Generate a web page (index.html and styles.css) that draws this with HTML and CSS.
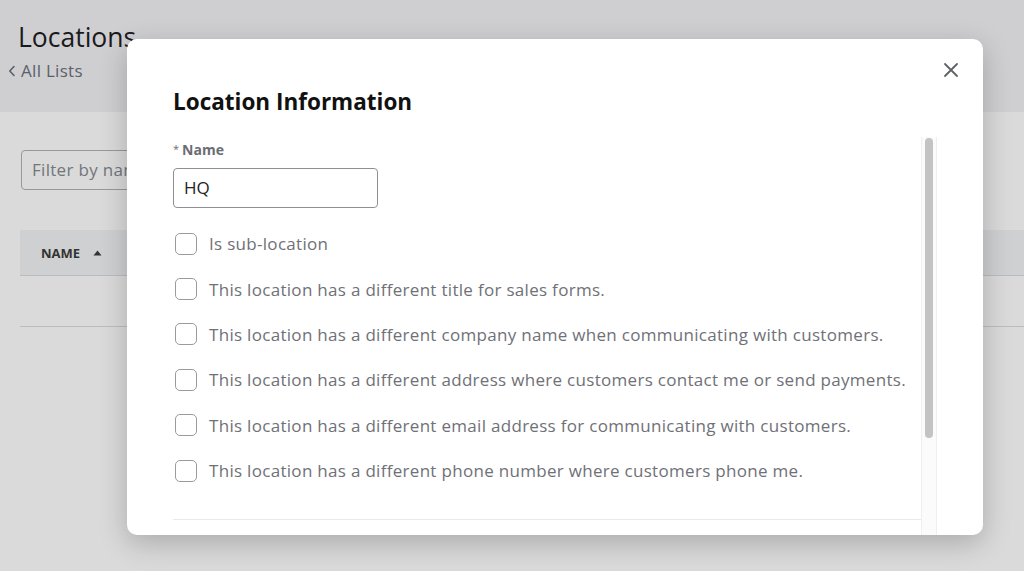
FILE: index.html
```html
<!DOCTYPE html>
<html lang="en">
<head>
<meta charset="utf-8">
<title>Locations</title>
<link rel="stylesheet" href="styles.css">
</head>
<body>
<div class="page">
  <header class="page-header">
    <h1 class="page-title">Locations</h1>
    <a class="back-link" href="#"><svg class="chev" width="8" height="12" viewBox="0 0 8 12"><path d="M6 1.5 L1.8 6 L6 10.5" stroke="#5a606b" stroke-width="1.6" fill="none" stroke-linecap="round" stroke-linejoin="round"/></svg>All Lists</a>
  </header>
  <main class="page-body">
    <div class="filter">Filter by name</div>
    <div class="table">
      <div class="table-head"><span class="th">NAME</span><svg class="sort" width="9" height="6" viewBox="0 0 9 6"><path d="M4.5 0.5 L8.5 5.5 L0.5 5.5 Z" fill="#333"/></svg></div>
      <div class="table-row"></div>
    </div>
  </main>
</div>

<div class="modal">
  <button class="close" aria-label="Close">
    <svg width="16" height="16" viewBox="0 0 16 16"><path d="M2 2 L14 14 M14 2 L2 14" stroke="#5f6168" stroke-width="1.8" stroke-linecap="round" fill="none"/></svg>
  </button>
  <h2 class="modal-title">Location Information</h2>
  <div class="modal-body">
    <div class="modal-scroll">
      <label class="field-label"><span class="req">*</span>Name</label>
      <div class="text-input">HQ</div>
      <ul class="checks">
        <li class="check"><span class="box"></span>Is sub-location</li>
        <li class="check"><span class="box"></span>This location has a different title for sales forms.</li>
        <li class="check"><span class="box"></span>This location has a different company name when communicating with customers.</li>
        <li class="check"><span class="box"></span>This location has a different address where customers contact me or send payments.</li>
        <li class="check"><span class="box"></span>This location has a different email address for communicating with customers.</li>
        <li class="check"><span class="box"></span>This location has a different phone number where customers phone me.</li>
      </ul>
      <div class="divider"></div>
    </div>
    <div class="scrollbar"><div class="thumb"></div></div>
  </div>
</div>
</body>
</html>
```

FILE: styles.css
```css
* { box-sizing: border-box; }
html, body { margin: 0; padding: 0; }
body {
  width: 1024px;
  height: 571px;
  overflow: hidden;
  font-family: "Open Sans", Lato, sans-serif;
  background: #dadada;
  position: relative;
}
.page { height: 571px; display: flex; flex-direction: column; }
.page-header {
  height: 112px;
  background: #cfcfd2;
  padding: 19px 0 0 8px;
}
.page-title {
  margin: 0 0 0 10px;
  font-weight: 400;
  font-size: 26.5px;
  line-height: 36px;
  color: #1a1a1c;
}
.back-link {
  display: flex;
  align-items: center;
  gap: 5px;
  margin-top: 4px;
  font-size: 17px;
  letter-spacing: 0.3px;
  line-height: 24px;
  color: #5a606b;
  text-decoration: none;
}
.chev { display: block; }
.page-body { flex: 1; padding: 38px 0 0 20px; }
.filter {
  margin-left: 1px;
  width: 300px;
  height: 40px;
  border: 1px solid #96989c;
  border-radius: 4px;
  padding: 0 10px;
  font-size: 17px;
  letter-spacing: 0.3px;
  line-height: 38px;
  color: #72757b;
}
.table { margin-top: 40px; }
.table-head {
  height: 46px;
  background: #cfd0d2;
  border-bottom: 1px solid #bbbcbf;
  display: flex;
  align-items: center;
  padding-left: 21px;
  gap: 13px;
}
.th { font-size: 13px; font-weight: 700; color: #333; }
.sort { display: block; }
.table-row { height: 51px; border-bottom: 1px solid #bcbdbf; }

.modal {
  position: absolute;
  left: 127px;
  top: 39px;
  width: 856px;
  height: 496px;
  background: #fff;
  border-radius: 10px;
  box-shadow: 0 8px 28px rgba(0,0,0,0.22);
  padding: 48px 46px 0 46px;
  overflow: hidden;
  display: flex;
  flex-direction: column;
}
.close {
  position: absolute;
  right: 24px;
  top: 23px;
  width: 16px;
  height: 16px;
  padding: 0;
  border: 0;
  background: none;
}
.close svg { display: block; }
.modal-title {
  margin: 0;
  font-size: 22.5px;
  line-height: 30px;
  font-weight: 700;
  color: #111;
}
.modal-body {
  margin-top: 20px;
  flex: 1;
  display: flex;
  min-height: 0;
}
.modal-scroll {
  flex: 1;
  overflow: hidden;
  padding-top: 3px;
}
.scrollbar {
  width: 16px;
  flex: none;
  background: #fbfbfb;
  border-left: 1px solid #efefef;
  border-right: 1px solid #efefef;
  padding: 1px 3px 0;
}
.thumb {
  height: 300px;
  border-radius: 5px;
  background: #c3c3c3;
}
.field-label {
  display: block;
  font-size: 14px;
  line-height: 18px;
  font-weight: 700;
  color: #6b6d73;
}
.req { font-size: 11px; font-weight: 400; margin-right: 3px; vertical-align: 2px; }
.text-input {
  margin-top: 9px;
  width: 205px;
  height: 40px;
  border: 1px solid #8e9095;
  border-radius: 4px;
  padding: 0 10px;
  font-size: 17px;
  line-height: 38px;
  color: #222;
}
.checks { list-style: none; margin: 13px 0 0; padding: 0; }
.check {
  height: 45.4px;
  display: flex;
  align-items: center;
  font-size: 17px;
  letter-spacing: 0.3px;
  color: #6f7177;
  white-space: nowrap;
}
.box {
  width: 22px;
  height: 22px;
  margin: 0 12px 0 2px;
  border: 1px solid #9a9ba0;
  border-radius: 5px;
  flex: none;
}
.divider { margin-top: 26px; height: 1px; background: #e9e9e9; }
```
